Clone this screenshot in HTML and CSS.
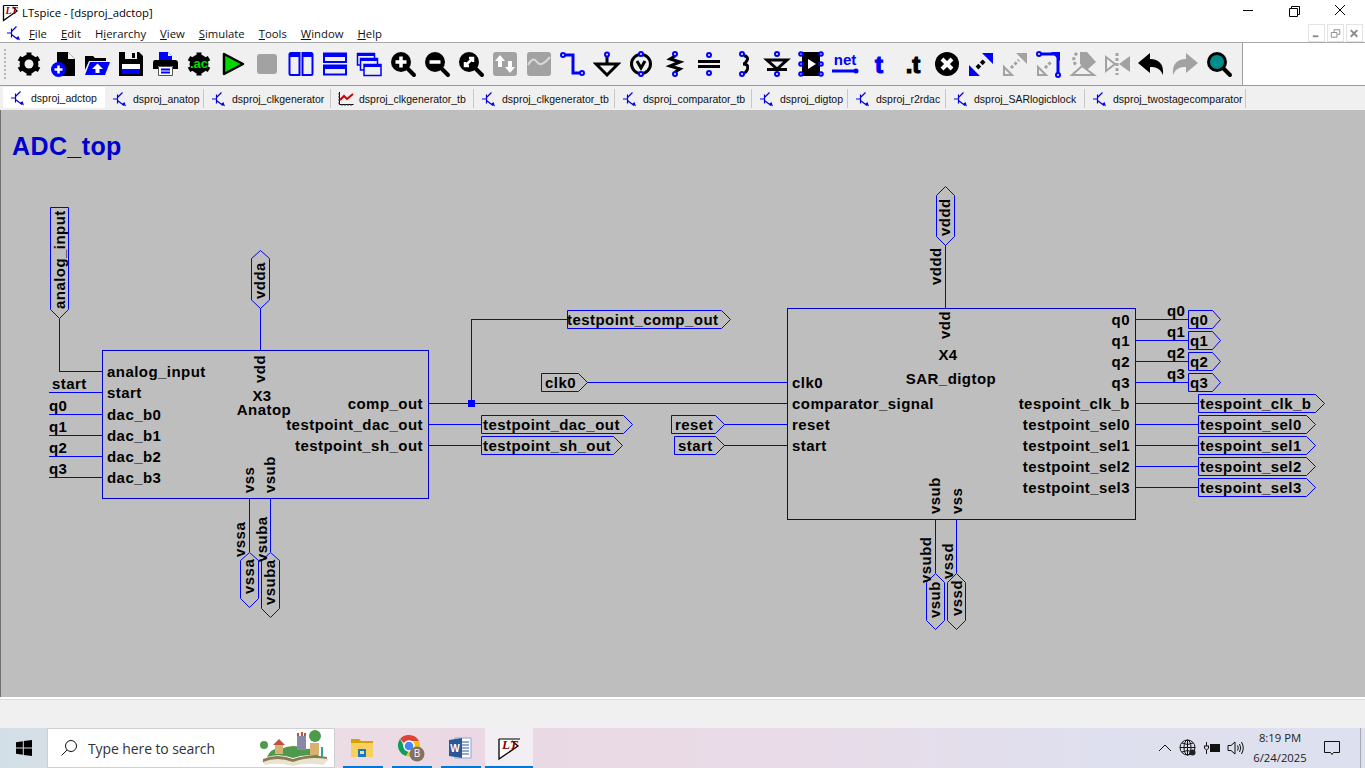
FILE: index.html
```html
<!DOCTYPE html>
<html lang="en">
<head>
<meta charset="utf-8">
<title>LTspice - [dsproj_adctop]</title>
<link rel="stylesheet" href="styles.css">
</head>
<body>
<svg class="defs" width="0" height="0" aria-hidden="true">
  <symbol id="trans" viewBox="0 0 16 16">
    <path class="tr" d="M1 8H5.5M5.5 3.5V12.5M5.5 6.5L10.5 1.5M5.5 9.5L12 14.5"/>
    <path class="tr-a" d="M10 13L14 15.5L12.5 11Z"/>
  </symbol>
  <symbol id="gear" viewBox="0 0 28 28">
    <circle class="k" cx="14" cy="14" r="9.5"/>
    <path class="tooth" d="M14 2.5V25.5M4 8.2L24 19.8M4 19.8L24 8.2"/>
  </symbol>
  <symbol id="mag" viewBox="0 0 28 28">
    <circle class="k" cx="12" cy="12" r="10"/>
    <path class="handle" d="M18.5 18.5L25 25"/>
  </symbol>
</svg>
<div class="app">
  <header class="titlebar">
    <svg class="title-logo" width="20" height="20" viewBox="0 0 20 20"><path class="lt-o" d="M2.5 3.5V18.5L16 9L12 5"/><path class="lt-r" d="M2.5 3.5H17"/><text class="lt-t lt-s" x="4.5" y="12">LT</text></svg>
    <span class="title-text">LTspice - [dsproj_adctop]</span>
    <div class="winbtns">
      <svg class="winbtn" width="46" height="24" viewBox="0 0 46 24"><path class="wb" d="M18 10.5H28"/></svg>
      <svg class="winbtn" width="46" height="24" viewBox="0 0 46 24"><path class="wb" d="M18.5 8.5H26.5V16.5H18.5ZM20.5 8.5V6.5H28.5V14.5H26.5"/></svg>
      <svg class="winbtn" width="46" height="24" viewBox="0 0 46 24"><path class="wb" d="M18 5L28 15M28 5L18 15"/></svg>
    </div>
  </header>
  <nav class="menubar">
    <svg class="menu-icon" width="16" height="16"><use href="#trans"/></svg>
    <span class="menu-item"><u>F</u>ile</span>
    <span class="menu-item"><u>E</u>dit</span>
    <span class="menu-item">H<u>i</u>erarchy</span>
    <span class="menu-item"><u>V</u>iew</span>
    <span class="menu-item"><u>S</u>imulate</span>
    <span class="menu-item"><u>T</u>ools</span>
    <span class="menu-item"><u>W</u>indow</span>
    <span class="menu-item"><u>H</u>elp</span>
    <div class="mdi">
      <span class="mdi-btn"><svg width="16" height="16" viewBox="0 0 16 16"><path class="mdi-g" d="M4 11.5H10"/></svg></span>
      <span class="mdi-btn"><svg width="16" height="16" viewBox="0 0 16 16"><path class="mdi-t" d="M3.5 7.5H9.5V12.5H3.5ZM6.5 7V4.5H12.5V9.5H10"/></svg></span>
      <span class="mdi-btn"><svg width="16" height="16" viewBox="0 0 16 16"><path class="mdi-x" d="M4 5L11 12M11 5L4 12"/></svg></span>
    </div>
  </nav>
  <div class="toolbar">
    <div class="tools">
      <span class="grip"></span>
      <svg class="ic" viewBox="0 0 28 28"><use href="#gear"/><circle class="bg" cx="14" cy="14" r="4.5"/></svg>
      <svg class="ic" viewBox="0 0 28 28"><path class="k" d="M8 2H19L26 9V26H8Z"/><path class="bg" d="M19 2L26 9H19Z"/><circle class="b" cx="9.5" cy="19.5" r="7.5"/><path class="wl" d="M5.5 19.5H13.5M9.5 15.5V23.5"/></svg>
      <svg class="ic" viewBox="0 0 28 28"><path class="k" d="M2 6H10L12 8H23V11H6L2 20Z"/><path class="b" d="M7 12H27L22 25H2Z"/><path class="w" d="M14.5 13.5L20 19H16.5V23H12.5V19H9Z"/></svg>
      <svg class="ic" viewBox="0 0 28 28"><path class="k" d="M2 2H22L26 6V26H2Z"/><path class="bg" d="M8 2H20V9H8Z"/><path class="k" d="M15 3H18V8H15Z"/><path class="w" d="M5 14H23V19H5Z"/><path class="b" d="M5 19H23V24H5Z"/></svg>
      <svg class="ic" viewBox="0 0 28 28"><path class="b" d="M8 2H17L21 6V10H8Z"/><path class="bg" d="M17 2L21 6H17Z"/><path class="k" d="M4 10H24Q27 10 27 13V19H2V13Q2 10 4 10Z"/><path class="w" d="M7 16H22V26H7Z"/><path class="bd" d="M7.5 16.5H21.5V25.5H7.5Z"/><path class="bl" d="M10 19.5H19M10 22.5H19"/></svg>
      <svg class="ic" viewBox="0 0 28 28"><use href="#gear"/><text class="ac" x="14" y="18">.ac</text></svg>
      <svg class="ic" viewBox="0 0 28 28"><path class="play" d="M5 4L24 14L5 24Z"/></svg>
      <svg class="ic" viewBox="0 0 28 28"><rect class="g" x="4" y="4" width="20" height="20" rx="3"/></svg>
      <svg class="ic" viewBox="0 0 28 28"><path class="win" d="M2.5 4.5Q2.5 3 4 3H12.5V25H4Q2.5 25 2.5 23.5ZM15.5 3H24Q25.5 3 25.5 4.5V23.5Q25.5 25 24 25H15.5Z"/><path class="bb" d="M3 3H12V7H3ZM16 3H25V7H16Z"/></svg>
      <svg class="ic" viewBox="0 0 28 28"><path class="win" d="M3 3.5H25V12H3ZM3 15.5H25V24.5H3Z"/><path class="bb" d="M3 3H25V7H3ZM3 15H25V19H3Z"/></svg>
      <svg class="ic" viewBox="0 0 28 28"><path class="win1" d="M2.5 3.5H19.5V15H2.5Z"/><path class="bb" d="M2.5 3H19.5V6H2.5Z"/><path class="winw" d="M5.5 8.5H22.5V20H5.5Z"/><path class="bb" d="M5.5 8H22.5V11H5.5Z"/><path class="winw" d="M9 14.5H26V25.5H9Z"/><path class="bb" d="M9 14H26V17H9Z"/></svg>
      <svg class="ic" viewBox="0 0 28 28"><use href="#mag"/><path class="wm" d="M6.5 12H17.5M12 6.5V17.5"/></svg>
      <svg class="ic" viewBox="0 0 28 28"><use href="#mag"/><path class="wm" d="M6.5 12H17.5"/></svg>
      <svg class="ic" viewBox="0 0 28 28"><use href="#mag"/><path class="wt" d="M8 16L16 8M8 12V16H12M12 8H16V12"/></svg>
      <svg class="ic" viewBox="0 0 28 28"><rect class="g" x="2" y="2" width="24" height="24" rx="3"/><path class="w" d="M9 5L14 11H11V17H7V11H4ZM19 23L14 17H17V11H21V17H24Z"/></svg>
      <svg class="ic" viewBox="0 0 28 28"><rect class="g" x="2" y="2" width="24" height="24" rx="3"/><path class="wave" d="M3 15Q8 6 12 12T25 7"/></svg>
      <svg class="ic" viewBox="0 0 28 28"><path class="wire" d="M4 5H14V23H23"/><circle class="pin" cx="4" cy="5" r="2"/><circle class="pin" cx="23" cy="23" r="2"/></svg>
      <svg class="ic" viewBox="0 0 28 28"><path class="kl" d="M14 7V13M3 14H25L14 25Z"/><circle class="pin" cx="14" cy="4.5" r="2"/></svg>
      <svg class="ic" viewBox="0 0 28 28"><circle class="kl" cx="14" cy="14" r="9.5"/><path class="kl" d="M10 11L14 18L18 11"/><circle class="pin" cx="14" cy="4" r="2"/><circle class="pin" cx="14" cy="24" r="2"/></svg>
      <svg class="ic" viewBox="0 0 28 28"><path class="kl" d="M14 6L9 9L19 12L9 16L19 19L14 22"/><circle class="pin" cx="14" cy="4" r="2"/><circle class="pin" cx="14" cy="24" r="2"/></svg>
      <svg class="ic" viewBox="0 0 28 28"><path class="kl" d="M3 11.5H25M3 16.5H25"/><circle class="pin" cx="14" cy="5" r="2"/><circle class="pin" cx="14" cy="23" r="2"/></svg>
      <svg class="ic" viewBox="0 0 28 28"><path class="kl" d="M15 5.5Q20 7 18 10.5Q16 14 14 14Q20 14 18.5 19Q17 23 15 22.5"/><circle class="pin" cx="13" cy="4" r="2"/><circle class="pin" cx="13" cy="24" r="2"/></svg>
      <svg class="ic" viewBox="0 0 28 28"><path class="kl" d="M4 10H24L14 19ZM4 19.5H24"/><circle class="pin" cx="14" cy="4" r="2"/><circle class="pin" cx="14" cy="24" r="2"/></svg>
      <svg class="ic" viewBox="0 0 28 28"><path class="k" d="M5 2H23V26H5Z"/><path class="w" d="M11 9L19 14L11 19Z"/><circle class="pin" cx="4" cy="4" r="1.8"/><circle class="pin" cx="24" cy="4" r="1.8"/><circle class="pin" cx="4" cy="14" r="1.8"/><circle class="pin" cx="24" cy="14" r="1.8"/><circle class="pin" cx="4" cy="24" r="1.8"/><circle class="pin" cx="24" cy="24" r="1.8"/></svg>
      <svg class="ic" viewBox="0 0 28 28"><text class="net" x="14" y="15">net</text><path class="wire" d="M1 21H25"/><circle class="b" cx="25" cy="21" r="2.5"/></svg>
      <svg class="ic" viewBox="0 0 28 28"><text class="tt tb" x="14" y="23">t</text></svg>
      <svg class="ic" viewBox="0 0 28 28"><text class="tt tk" x="14" y="23">.t</text></svg>
      <svg class="ic" viewBox="0 0 28 28"><circle class="k" cx="14" cy="14" r="12"/><path class="wx" d="M9 9L19 19M19 9L9 19"/></svg>
      <svg class="ic" viewBox="0 0 28 28"><path class="b" d="M26 3V14L15 3ZM2 26V15L13 26Z"/><path class="dots" d="M10 18L18 10"/></svg>
      <svg class="ic" viewBox="0 0 28 28"><path class="g" d="M26 3V14L15 3Z"/><path class="gl" d="M3 25V17L11 25Z"/><path class="dotsg" d="M10 18L18 10"/></svg>
      <svg class="ic" viewBox="0 0 28 28"><path class="gl" d="M3 25V17L11 25Z"/><path class="dotsg" d="M10 18L17 11"/><path class="wire" d="M5 4H23V24"/><circle class="pin" cx="4" cy="4" r="2"/><circle class="pin" cx="23" cy="25" r="2"/><path class="b" d="M16 2H25V11Z"/></svg>
      <svg class="ic" viewBox="0 0 28 28"><path class="g" d="M11 2H18L27 12L18 20L11 14Z"/><path class="gl" d="M3 25L13 16L25 25Z"/><path class="dotsg" d="M8 3Q2 9 7 15"/></svg>
      <svg class="ic" viewBox="0 0 28 28"><path class="g" d="M16 14L27 6V22Z"/><path class="gl" d="M3 7V21L12 14Z"/><path class="dotsg" d="M14 3V25"/></svg>
      <svg class="ic" viewBox="0 0 28 28"><path class="k" d="M13 3V9C22 9 27 14 26 25C23 18 19 17 13 17V23L1 13Z"/></svg>
      <svg class="ic" viewBox="0 0 28 28"><path class="g" d="M15 3V9C6 9 1 14 2 25C5 18 9 17 15 17V23L27 13Z"/></svg>
      <svg class="ic" viewBox="0 0 28 28"><use href="#mag"/><circle class="teal" cx="12" cy="12" r="7"/></svg>
    </div>
    <div class="toolbar-rest"></div>
  </div>
  <div class="tabs">
    <span class="tab active"><svg class="tab-ic" width="16" height="16"><use href="#trans"/></svg>dsproj_adctop</span>
    <span class="tab"><svg class="tab-ic" width="16" height="16"><use href="#trans"/></svg>dsproj_anatop</span>
    <span class="tab"><svg class="tab-ic" width="16" height="16"><use href="#trans"/></svg>dsproj_clkgenerator</span>
    <span class="tab"><svg class="tab-ic" width="16" height="16" viewBox="0 0 16 16"><path class="plot" d="M1.5 1V13.5H15.5"/><path class="plot-w" d="M2 9L6 5L9 8L15 3"/><path class="plot-d" d="M0 3H2M0 6H2M0 9H2M0 12H2M4 15V13M7 15V13M10 15V13M13 15V13"/></svg>dsproj_clkgenerator_tb</span>
    <span class="tab"><svg class="tab-ic" width="16" height="16"><use href="#trans"/></svg>dsproj_clkgenerator_tb</span>
    <span class="tab"><svg class="tab-ic" width="16" height="16"><use href="#trans"/></svg>dsproj_comparator_tb</span>
    <span class="tab"><svg class="tab-ic" width="16" height="16"><use href="#trans"/></svg>dsproj_digtop</span>
    <span class="tab"><svg class="tab-ic" width="16" height="16"><use href="#trans"/></svg>dsproj_r2rdac</span>
    <span class="tab"><svg class="tab-ic" width="16" height="16"><use href="#trans"/></svg>dsproj_SARlogicblock</span>
    <span class="tab"><svg class="tab-ic" width="16" height="16"><use href="#trans"/></svg>dsproj_twostagecomparator</span>
  </div>
  <main class="canvas">
    <svg class="sch" width="1365" height="587" viewBox="0 110 1365 587">
      <text class="heading" x="12" y="155">ADC_top</text>

      <path class="box" d="M102.5 350.5H428.5V498.5H102.5Z"/>
      <path class="box" d="M787.5 308.5H1135.5V519.5H787.5Z"/>

      <path class="wr" d="M59.5 319V371.5H102M49 392.5H102M49 414.5H102M49 435.5H102M49 456.5H102M49 477.5H102"/>
      <path class="wr" d="M260.5 308V350M249.5 498V552M270.5 498V552"/>
      <path class="wr" d="M428 403.5H787M471.5 403V319.5H567M428 424.5H481M428 445.5H481"/>
      <path class="wr" d="M587 382.5H787M724 424.5H787M724 445.5H787"/>
      <path class="wr" d="M945.5 245V308M935.5 519V573M956.5 519V573"/>
      <path class="wr" d="M1135 319.5H1188M1135 340.5H1188M1135 361.5H1188M1135 382.5H1188M1135 403.5H1198M1135 424.5H1198M1135 445.5H1198M1135 466.5H1198M1135 487.5H1198"/>
      <rect class="junction" x="468" y="400" width="7" height="7"/>

      <polygon class="flag" points="50.5,207.5 68.5,207.5 68.5,309.5 59.5,318.5 50.5,309.5"/>
      <polygon class="flag" points="260.5,250.5 269.5,258.5 269.5,300 260.5,308.5 251.5,300 251.5,258.5"/>
      <polygon class="flag" points="249.5,552.5 258.5,560.5 258.5,598.5 249.5,607.5 240.5,598.5 240.5,560.5"/>
      <polygon class="flag" points="270.5,552.5 279.5,560.5 279.5,608.5 270.5,617.5 261.5,608.5 261.5,560.5"/>
      <polygon class="flag" points="945.5,186.5 954.5,195.5 954.5,236.5 945.5,245.5 936.5,236.5 936.5,195.5"/>
      <polygon class="flag" points="935.5,573.5 944.5,582.5 944.5,620.5 935.5,629.5 926.5,620.5 926.5,582.5"/>
      <polygon class="flag" points="956.5,573.5 965.5,582.5 965.5,620.5 956.5,629.5 947.5,620.5 947.5,582.5"/>
      <polygon class="flag" points="567.5,310.5 721.5,310.5 730.5,319.5 721.5,328.5 567.5,328.5"/>
      <polygon class="flag" points="541.5,373.5 578.5,373.5 587.5,382.5 578.5,391.5 541.5,391.5"/>
      <polygon class="flag" points="481.5,415.5 623.5,415.5 632.5,424.5 623.5,433.5 481.5,433.5"/>
      <polygon class="flag" points="481.5,436.5 613.5,436.5 622.5,445.5 613.5,454.5 481.5,454.5"/>
      <polygon class="flag" points="671.5,415.5 715.5,415.5 724.5,424.5 715.5,433.5 671.5,433.5"/>
      <polygon class="flag" points="674.5,436.5 715.5,436.5 724.5,445.5 715.5,454.5 674.5,454.5"/>
      <polygon class="flag" points="1188.5,310.5 1212.5,310.5 1220.5,319.5 1212.5,328.5 1188.5,328.5"/>
      <polygon class="flag" points="1188.5,331.5 1212.5,331.5 1220.5,340.5 1212.5,349.5 1188.5,349.5"/>
      <polygon class="flag" points="1188.5,352.5 1212.5,352.5 1220.5,361.5 1212.5,370.5 1188.5,370.5"/>
      <polygon class="flag" points="1188.5,373.5 1212.5,373.5 1220.5,382.5 1212.5,391.5 1188.5,391.5"/>
      <polygon class="flag" points="1198.5,394.5 1315.5,394.5 1324.5,403.5 1315.5,412.5 1198.5,412.5"/>
      <polygon class="flag" points="1198.5,415.5 1306.5,415.5 1315.5,424.5 1306.5,433.5 1198.5,433.5"/>
      <polygon class="flag" points="1198.5,436.5 1306.5,436.5 1315.5,445.5 1306.5,454.5 1198.5,454.5"/>
      <polygon class="flag" points="1198.5,457.5 1306.5,457.5 1315.5,466.5 1306.5,475.5 1198.5,475.5"/>
      <polygon class="flag" points="1198.5,478.5 1306.5,478.5 1315.5,487.5 1306.5,496.5 1198.5,496.5"/>

      <g class="lbl">
        <text x="107" y="377">analog_input</text>
        <text x="107" y="398">start</text>
        <text x="107" y="420">dac_b0</text>
        <text x="107" y="441">dac_b1</text>
        <text x="107" y="462">dac_b2</text>
        <text x="107" y="483">dac_b3</text>
        <text x="52" y="389">start</text>
        <text x="49" y="411">q0</text>
        <text x="49" y="432">q1</text>
        <text x="49" y="453">q2</text>
        <text x="49" y="474">q3</text>
        <text class="mid" x="262" y="401">X3</text>
        <text class="mid" x="264" y="415">Anatop</text>
        <text class="end" x="423" y="409">comp_out</text>
        <text class="end" x="423" y="430">testpoint_dac_out</text>
        <text class="end" x="423" y="451">testpoint_sh_out</text>
        <text x="567" y="325">testpoint_comp_out</text>
        <text x="545" y="388">clk0</text>
        <text x="483" y="430">testpoint_dac_out</text>
        <text x="483" y="451">testpoint_sh_out</text>
        <text x="675" y="430">reset</text>
        <text x="678" y="451">start</text>
        <text x="792" y="388">clk0</text>
        <text x="792" y="409">comparator_signal</text>
        <text x="792" y="430">reset</text>
        <text x="792" y="451">start</text>
        <text class="mid" x="948" y="360">X4</text>
        <text class="mid" x="951" y="384">SAR_digtop</text>
        <text class="end" x="1130" y="325">q0</text>
        <text class="end" x="1130" y="346">q1</text>
        <text class="end" x="1130" y="367">q2</text>
        <text class="end" x="1130" y="388">q3</text>
        <text class="end" x="1130" y="409">tespoint_clk_b</text>
        <text class="end" x="1130" y="430">testpoint_sel0</text>
        <text class="end" x="1130" y="451">testpoint_sel1</text>
        <text class="end" x="1130" y="472">testpoint_sel2</text>
        <text class="end" x="1130" y="493">testpoint_sel3</text>
        <text x="1167" y="316">q0</text>
        <text x="1167" y="337">q1</text>
        <text x="1167" y="358">q2</text>
        <text x="1167" y="379">q3</text>
        <text x="1190" y="325">q0</text>
        <text x="1190" y="346">q1</text>
        <text x="1190" y="367">q2</text>
        <text x="1190" y="388">q3</text>
        <text x="1200" y="409">tespoint_clk_b</text>
        <text x="1200" y="430">tespoint_sel0</text>
        <text x="1200" y="451">tespoint_sel1</text>
        <text x="1200" y="472">tespoint_sel2</text>
        <text x="1200" y="493">tespoint_sel3</text>
        <text transform="translate(65 309) rotate(-90)">analog_input</text>
        <text transform="translate(265 299) rotate(-90)">vdda</text>
        <text transform="translate(265 383) rotate(-90)">vdd</text>
        <text transform="translate(254 493) rotate(-90)">vss</text>
        <text transform="translate(275 493) rotate(-90)">vsub</text>
        <text transform="translate(245 557) rotate(-90)">vssa</text>
        <text transform="translate(267 562) rotate(-90)">vsuba</text>
        <text transform="translate(254 594) rotate(-90)">vssa</text>
        <text transform="translate(275 605) rotate(-90)">vsuba</text>
        <text transform="translate(950 236) rotate(-90)">vddd</text>
        <text transform="translate(941 285) rotate(-90)">vddd</text>
        <text transform="translate(950 339) rotate(-90)">vdd</text>
        <text transform="translate(940 514) rotate(-90)">vsub</text>
        <text transform="translate(962 514) rotate(-90)">vss</text>
        <text transform="translate(931 583) rotate(-90)">vsubd</text>
        <text transform="translate(953 579) rotate(-90)">vssd</text>
        <text transform="translate(940 618) rotate(-90)">vsub</text>
        <text transform="translate(962 616) rotate(-90)">vssd</text>
      </g>
    </svg>
  </main>
  <div class="statusbar"></div>
  <footer class="taskbar">
    <span class="start"><svg width="16" height="16" viewBox="0 0 16 16"><path class="win-k" d="M0 2.2L6.8 1.2V7.5H0ZM7.8 1.1L16 0V7.5H7.8ZM0 8.5H6.8V14.8L0 13.8ZM7.8 8.5H16V16L7.8 14.9Z"/></svg></span>
    <div class="search">
      <svg class="search-ic" width="18" height="18" viewBox="0 0 18 18"><circle class="ln" cx="11" cy="7" r="5.5"/><path class="ln" d="M7 11L1.5 16.5"/></svg>
      <span class="search-text">Type here to search</span>
      <svg class="book" width="76" height="38" viewBox="0 0 76 38">
        <path class="bk-w" d="M4 32Q20 26 36 32Q52 26 72 30L66 36Q50 33 36 37Q20 33 8 36Z"/>
        <path class="bk-p" d="M6 30Q20 24 36 30Q52 24 70 28L70 30Q52 27 36 33Q20 27 6 33Z"/>
        <path class="bk-g" d="M10 28Q14 18 24 20Q36 14 50 20Q60 18 62 28Q50 24 36 29Q22 24 10 28Z"/>
        <rect class="bk-c" x="40" y="7" width="9" height="14"/>
        <path class="bk-r" d="M40 7V4H42V7ZM44 7V3H46V7ZM47 7V4H49V7Z"/>
        <circle class="bk-g" cx="58" cy="7" r="6"/>
        <rect class="bk-y" x="53" y="14" width="9" height="12"/>
        <rect class="bk-y" x="18" y="16" width="8" height="9"/>
        <path class="bk-r" d="M16 16L22 10L28 16Z"/>
        <circle class="bk-g" cx="7" cy="16" r="4"/>
        <rect class="bk-t" x="64" y="18" width="2" height="10"/>
      </svg>
    </div>
    <span class="tb-app run">
      <svg width="24" height="24" viewBox="0 0 24 24"><path class="fold-b" d="M1 3H9L11 5H23V9H1Z"/><path class="fold-y" d="M1 7H23V21H1Z"/><path class="fold-d" d="M8 13H16V21H8Z"/><path class="fold-l" d="M10 15H14V18H10Z"/></svg>
    </span>
    <span class="tb-app run">
      <svg width="28" height="28" viewBox="0 0 28 28"><path class="cr-r" d="M12 1A11 11 0 0 1 22 7H12A5 5 0 0 0 7 9L3 5A11 11 0 0 1 12 1Z"/><path class="cr-g" d="M3 5L8 14A5 5 0 0 0 12 17L9 22A11 11 0 0 1 3 5Z"/><path class="cr-y" d="M22 7A11 11 0 0 1 9 22L14 15A5 5 0 0 0 16 8Z"/><circle class="cr-b" cx="12" cy="12" r="5"/><circle class="cr-a" cx="20" cy="20" r="7.5"/><text class="cr-t" x="20" y="23">B</text></svg>
    </span>
    <span class="tb-app run">
      <svg width="24" height="24" viewBox="0 0 24 24"><path class="wd-p" d="M7 2H23V22H7Z"/><path class="wd-l" d="M14 6H21M14 9H21M14 12H21M14 15H21M14 18H21"/><path class="wd-b" d="M1 4L14 2V22L1 20Z"/><text class="wd-t" x="7" y="16">W</text></svg>
    </span>
    <span class="tb-app run active"><svg width="26" height="26" viewBox="0 0 26 26"><path class="lt-o" d="M3 4V24L22 11L16 6"/><path class="lt-r" d="M3 4H24"/><text class="lt-t" x="6" y="14">LT</text></svg></span>
    <div class="tray">
      <svg class="tr-ic" width="16" height="16" viewBox="0 0 16 16"><path class="ln" d="M2 11L8 5L14 11"/></svg>
      <svg class="tr-ic" width="18" height="18" viewBox="0 0 18 18"><circle class="ln" cx="8.5" cy="8.5" r="7.5"/><path class="ln" d="M1 8.5H16M8.5 1V16M3 4Q8.5 7 14 4M3 13Q8.5 10 14 13"/><ellipse class="ln" cx="8.5" cy="8.5" rx="3.5" ry="7.5"/><circle class="tr-d" cx="13.5" cy="13.5" r="3"/></svg>
      <svg class="tr-ic" width="18" height="16" viewBox="0 0 18 16"><path class="tr-k" d="M7 4H17V12H7Z"/><path class="ln" d="M1 6H6M3.5 2V6M1.5 6V8.5Q3.5 11 5.5 8.5V6M3.5 10V14"/></svg>
      <svg class="tr-ic" width="18" height="18" viewBox="0 0 18 18"><path class="ln" d="M1 6.5H4L8 3V15L4 11.5H1ZM10.5 6.5Q12 9 10.5 11.5M12.5 5Q15 9 12.5 13M14.5 3Q18 9 14.5 15"/></svg>
      <div class="clock"><span>8:19 PM</span><span>6/24/2025</span></div>
      <svg class="note" width="16" height="16" viewBox="0 0 16 16"><path class="ln" d="M.5 1.5H15.5V12.5H9.5L8 14.5L6.5 12.5H.5Z"/></svg>
    </div>
    <span class="desk"></span>
  </footer>
</div>
</body>
</html>
```

FILE: styles.css
```css
* { box-sizing: border-box; }
html, body { margin: 0; padding: 0; width: 1365px; height: 768px; overflow: hidden; background: #fff; }
body { font-family: "Open Sans", "Noto Sans", sans-serif; color: #000; }
.defs { position: absolute; }
.app { width: 1365px; height: 768px; display: flex; flex-direction: column; }

/* title */
.titlebar { height: 24px; display: flex; align-items: center; background: #fff; padding-left: 0; }
.title-logo { flex: none; margin-left: 1px; margin-right: 1px; }
.title-text { font-size: 11.3px; color: #000; }
.winbtns { margin-left: auto; display: flex; margin-right: 2px; }
.winbtn { display: block; }
.wb { fill: none; stroke: #000; stroke-width: 1; }

/* menu */
.menubar { height: 18px; display: flex; align-items: center; background: #fff; padding-left: 6px; gap: 14px; font-size: 11.3px; }
.menu-icon { margin-right: -7px; flex: none; }
.menu-item { color: #111; }
.mdi { margin-left: auto; display: flex; gap: 2px; margin-right: 2px; }
.mdi-btn { width: 17px; height: 18px; border: 1px solid #e3e3e3; background: #fff; display: flex; align-items: center; justify-content: center; }
.mdi-g, .mdi-t, .mdi-x { fill: none; stroke: #8a8a8a; stroke-width: 1; }
.mdi-g { stroke-width: 2; }
.mdi-x { stroke-width: 2; }

/* toolbar */
.toolbar { height: 44px; display: flex; border-top: 1px solid #a9a9a9; border-bottom: 1px solid #9a9a9a; background: #fff; }
.tools { width: 1243px; display: flex; align-items: center; background: #f0f0f0; border-right: 1px solid #a0a0a0; padding-left: 4px; }
.grip { width: 2px; height: 30px; margin-right: 6px; flex: none; background: repeating-linear-gradient(#b5b5b5 0 2px, transparent 2px 4px); }
.ic { width: 28px; height: 28px; margin: 0 3px; flex: none; }
.k { fill: #000; }
.w { fill: #fff; }
.b { fill: #0000ff; }
.g { fill: #a2a2a2; }
.bg { fill: #f0f0f0; }
.tooth { fill: none; stroke: #000; stroke-width: 5; }
.wl { fill: none; stroke: #fff; stroke-width: 2.5; }
.bd { fill: none; stroke: #555; stroke-width: 1; }
.bl { fill: none; stroke: #0000ff; stroke-width: 2; }
.ac { fill: #00e000; font: bold 13px "Liberation Sans", sans-serif; text-anchor: middle; }
.play { fill: #00d800; stroke: #000; stroke-width: 2.5; stroke-linejoin: round; }
.win { fill: #f0f0f0; stroke: #0000ff; stroke-width: 2; }
.win1 { fill: #f0f0f0; stroke: #0000ff; stroke-width: 1.5; }
.winw { fill: #f0f0f0; stroke: #0000ff; stroke-width: 1.5; }
.bb { fill: #0000ff; }
.wm { fill: none; stroke: #fff; stroke-width: 3.5; }
.wt { fill: none; stroke: #fff; stroke-width: 2.5; }
.handle { fill: none; stroke: #000; stroke-width: 4; stroke-linecap: round; }
.wave { fill: none; stroke: #d8d8d8; stroke-width: 2; }
.wire { fill: none; stroke: #0000ff; stroke-width: 3; }
.pin { fill: #f0f0f0; stroke: #0000ff; stroke-width: 2; }
.kl { fill: none; stroke: #000; stroke-width: 3; }
.net { fill: #0000ff; font: bold 15px "Liberation Sans", sans-serif; text-anchor: middle; }
.tt { font: bold 24px "Liberation Sans", sans-serif; text-anchor: middle; stroke-width: 1.2px; }
.tb { fill: #0000ff; stroke: #0000ff; }
.tk { fill: #000; stroke: #000; }
.wx { fill: none; stroke: #fff; stroke-width: 4; }
.dots { fill: none; stroke: #000; stroke-width: 4; stroke-dasharray: 4 2; }
.dotsg { fill: none; stroke: #a2a2a2; stroke-width: 3; stroke-dasharray: 3 2; }
.gl { fill: #f0f0f0; stroke: #a2a2a2; stroke-width: 2; }
.teal { fill: #008c8c; }
.toolbar-rest { flex: 1; background: #fff; }

/* tabs */
.tabs { height: 24px; display: flex; align-items: flex-end; background: #f0f0f0; padding: 0 0 2px 3px; font-family: "Liberation Sans", sans-serif; font-size: 10.5px; color: #111; }
.tab { height: 19px; padding: 0 2px 0 7px; display: flex; align-items: center; gap: 5px; border-right: 1px solid #c8c8c8; white-space: nowrap; }
.tab:nth-child(1) { width: 102px; }
.tab:nth-child(2) { width: 99px; }
.tab:nth-child(3) { width: 127px; }
.tab:nth-child(4) { width: 143px; }
.tab:nth-child(5) { width: 141px; }
.tab:nth-child(6) { width: 137px; }
.tab:nth-child(7) { width: 96px; }
.tab:nth-child(8) { width: 98px; }
.tab:nth-child(9) { width: 139px; }
.tab:nth-child(10) { width: 161px; }
.tab.active { height: 21px; background: #fff; border-right: 0; }
.tab-ic { flex: none; }
.tr { fill: none; stroke: #0000e0; stroke-width: 1.2; }
.tr-a { fill: #0000e0; }
.plot { fill: none; stroke: #000; stroke-width: 1; }
.plot-w { fill: none; stroke: #d00000; stroke-width: 2; }
.plot-d { fill: none; stroke: #444; stroke-width: 1; }

/* schematic */
.canvas { flex: 1; min-height: 0; background: #bebebe; position: relative; overflow: hidden; border-left: 1px solid #707070; }
.sch { position: absolute; left: -1px; top: 0; display: block; }
.heading { font: bold 25px "Liberation Sans", sans-serif; fill: #0000cd; letter-spacing: .4px; }
.box { fill: none; stroke: #0000c8; stroke-width: 1; shape-rendering: crispEdges; }
.wr { fill: none; stroke: #0000ff; stroke-width: 1; shape-rendering: crispEdges; }
.flag { fill: none; stroke: #0000ff; stroke-width: 1; }
.junction { fill: #0000ff; }
.lbl { font: bold 15px "Liberation Sans", sans-serif; letter-spacing: .45px; fill: #000; }
.lbl .end { text-anchor: end; }
.lbl .mid { text-anchor: middle; }

/* status */
.statusbar { height: 31px; flex: none; background: #f0f0f0; border-top: 2px solid #fff; box-shadow: inset 0 1px 0 #dcdcdc; }

/* taskbar */
.taskbar { height: 40px; flex: none; display: flex; align-items: stretch; background: linear-gradient(90deg, #d3dfe6 0, #dcdde4 130px, #ecdce4 340px, #ead9e4 480px, #e9dce8 800px, #dfe0ef 1100px, #dde0ee 100%); }
.start { width: 47px; display: flex; align-items: center; justify-content: center; }
.search { width: 288px; height: 40px; background: #fff; border: 1px solid #cfcfcf; display: flex; align-items: center; position: relative; flex: none; margin-right: 2px; }
.search-ic { margin-left: 12px; flex: none; }
.search-text { margin-left: 10px; font-size: 14px; color: #333; font-family: "Open Sans", sans-serif; letter-spacing: -.1px; }
.book { position: absolute; right: 1px; top: 0; }
.bk-w { fill: #e8e4d0; }
.bk-p { fill: #8a7a50; }
.bk-g { fill: #4f9a4a; }
.bk-c { fill: #8a88a8; }
.bk-r { fill: #c05040; }
.bk-y { fill: #d8b070; }
.bk-t { fill: #30a0a0; }
.tb-app { width: 49px; display: flex; align-items: center; justify-content: center; position: relative; flex: none; }
.tb-app.run::after { content: ""; position: absolute; left: 6px; right: 3px; bottom: 0; height: 2px; background: #0078d7; }
.tb-app.active { background: #f3edf4; width: 48px; margin-left: 1px; }
.tb-app.active::after { left: 0; right: 0; }
.fold-b { fill: #d8a000; }
.fold-y { fill: #f8d060; }
.fold-d { fill: #1878c8; }
.fold-l { fill: #f8e090; }
.cr-r { fill: #db4437; }
.cr-g { fill: #0f9d58; }
.cr-y { fill: #f4c20d; }
.cr-b { fill: #4285f4; stroke: #fff; stroke-width: 1.5; }
.cr-a { fill: #86705f; }
.cr-t { fill: #fff; font: 10px "Open Sans", sans-serif; text-anchor: middle; }
.wd-p { fill: #fff; stroke: #8aa4cc; stroke-width: 1; }
.wd-l { fill: none; stroke: #2b579a; stroke-width: 1; }
.wd-b { fill: #2b579a; }
.wd-t { fill: #fff; font: bold 10px "Liberation Sans", sans-serif; text-anchor: middle; }
.lt-o { fill: #fff; stroke: #000; stroke-width: 1.3; }
.lt-t { fill: #900000; font: italic bold 13px "Liberation Serif", serif; }
.lt-s { font-size: 10px; }
.lt-r { stroke: #000; stroke-width: 1; fill: none; }
.tray { margin-left: auto; display: flex; align-items: center; color: #222; font-size: 11.3px; }
.tr-ic { margin-right: 6px; flex: none; }
.ln { fill: none; stroke: #111; stroke-width: 1; }
.tr-k { fill: #111; }
.tr-d { fill: #222; }
.clock { width: 70px; display: flex; flex-direction: column; align-items: center; line-height: 20px; margin-left: -6px; }
.note { margin: 0 20px 0 9px; flex: none; }
.desk { width: 5px; border-left: 1px solid #a8a8b0; flex: none; }
.win-k { fill: #000; }
```
